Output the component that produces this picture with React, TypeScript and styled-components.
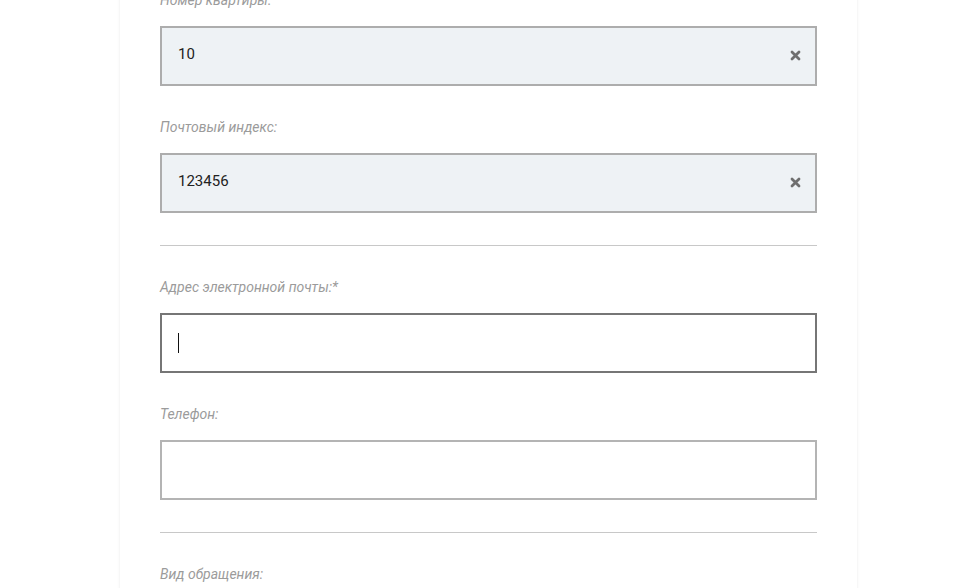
import React from 'react';
import styled, { createGlobalStyle, css } from 'styled-components';

const GlobalStyle = createGlobalStyle`
  html, body {
    margin: 0;
    padding: 0;
    background: #ffffff;
    overflow: hidden;
  }
  body {
    font-family: Roboto, "Liberation Sans", Arial, sans-serif;
  }
`;

const Page = styled.div`
  width: 958px;
  height: 588px;
  overflow: hidden;
`;

const Card = styled.div`
  width: 737px;
  margin: -10px 0 0 120px;
  padding: 0 40px 40px;
  box-sizing: border-box;
  background: #fff;
  box-shadow: 0 0 3px rgba(0, 0, 0, 0.09);
  min-height: 640px;
`;

const Field = styled.div`
  margin-bottom: 31px;
`;

const Label = styled.label`
  display: block;
  font-size: 14px;
  line-height: 20px;
  font-style: italic;
  color: #9b9b9b;
  margin-bottom: 16px;
`;

const InputBox = styled.div<{ $filled?: boolean; $focused?: boolean }>`
  position: relative;
  height: 60px;
  box-sizing: border-box;
  border: 2px solid #b4b4b4;
  background: #fff;
  display: flex;
  align-items: center;
  padding: 0 14px 0 16px;
  ${(p) =>
    p.$filled &&
    css`
      background: #eef2f5;
      border-color: #adadad;
    `}
  ${(p) =>
    p.$focused &&
    css`
      border-color: #767676;
    `}
`;

const Value = styled.span`
  font-size: 15px;
  color: #222;
  margin-top: -4px;
  flex: 1;
`;

const Caret = styled.span`
  display: block;
  width: 1px;
  height: 20px;
  background: #111;
`;

const ClearButton = styled.button`
  border: 0;
  background: none;
  padding: 0;
  width: 12px;
  height: 12px;
  display: flex;
  align-items: center;
  justify-content: center;
  margin-top: -2px;
  cursor: pointer;
  color: #6f6f6f;
`;

const Divider = styled.hr`
  border: 0;
  height: 1px;
  background: #c8c8c8;
  margin: 32px 0 31px;
`;

const ClearIcon = () => (
  <svg width="11" height="11" viewBox="0 0 11 11">
    <path d="M2 2 L9 9 M9 2 L2 9" stroke="currentColor" strokeWidth="2.8" strokeLinecap="round" />
  </svg>
);

function TextField({
  label,
  value,
  focused,
}: {
  label: string;
  value?: string;
  focused?: boolean;
}) {
  const filled = !!value;
  return (
    <Field>
      <Label>{label}</Label>
      <InputBox $filled={filled} $focused={focused}>
        {focused && <Caret />}
        {filled && <Value>{value}</Value>}
        {filled && (
          <ClearButton aria-label="Очистить">
            <ClearIcon />
          </ClearButton>
        )}
      </InputBox>
    </Field>
  );
}

export default function App() {
  return (
    <Page>
      <GlobalStyle />
      <Card>
        <TextField label="Номер квартиры:" value="10" />
        <TextField label="Почтовый индекс:" value="123456" />
        <Divider />
        <TextField label="Адрес электронной почты:*" focused />
        <TextField label="Телефон:" />
        <Divider />
        <Field>
          <Label>Вид обращения:</Label>
        </Field>
      </Card>
    </Page>
  );
}
